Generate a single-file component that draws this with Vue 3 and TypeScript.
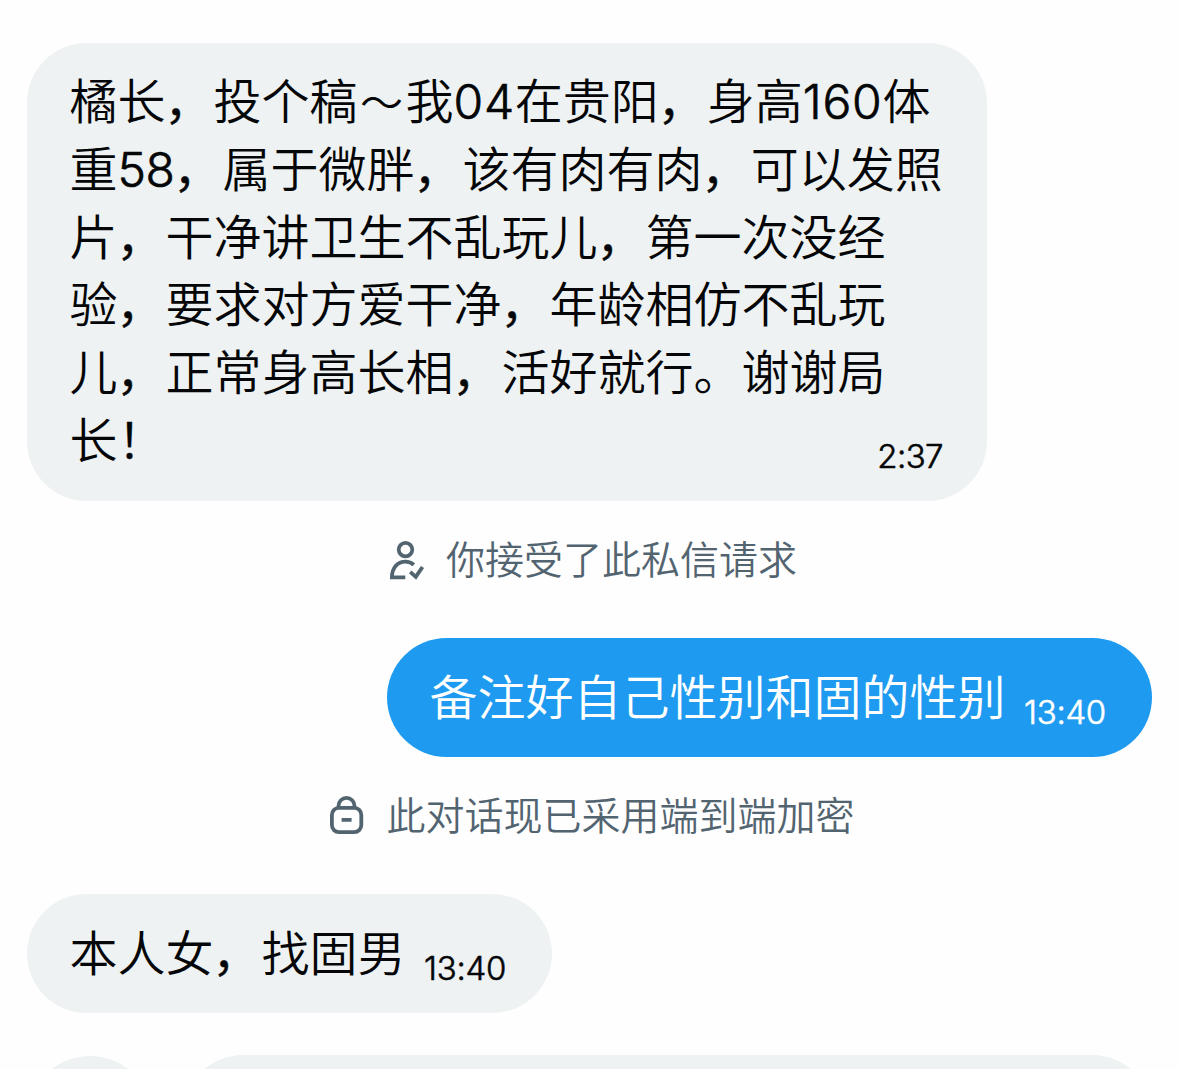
<script setup lang="ts">
interface Run {
  text: string
  kind: string
}

const request: string[] = [
  '橘长，投个稿～我04在贵阳，身高160体',
  '重58，属于微胖，该有肉有肉，可以发照',
  '片，干净讲卫生不乱玩儿，第一次没经',
  '验，要求对方爱干净，年龄相仿不乱玩',
  '儿，正常身高长相，活好就行。谢谢局',
  '长！',
]

function kindOf(text: string): string {
  if (/\d/.test(text)) return text === '58' ? 'num pair' : 'num'
  if (text === '，') return 'comma'
  if (text === '～') return 'wave'
  return text === '！' ? 'bang' : 'han'
}

function runs(line: string): Run[] {
  return (line.match(/\d+|[，！～]|[^\d，！～]+/g) ?? []).map((text) => ({ text, kind: kindOf(text) }))
}
</script>

<template>
  <main class="chat">
    <section class="bubble incoming long">
      <div class="body">
        <p v-for="(line, i) in request" :key="i" class="line">
          <span v-for="(run, j) in runs(line)" :key="j" :class="run.kind">{{ run.text }}</span>
        </p>
      </div>
      <time class="time">2:37</time>
    </section>

    <div class="notice accepted">
      <svg class="icon" width="40" height="44" viewBox="0 0 40 44" fill="none" stroke="currentColor" stroke-width="3.8">
        <circle cx="17.5" cy="11.6" r="6.8" />
        <path d="M17.3 39.4H3.9C4 30.2 9.2 23.7 17.5 23.7c3.4 0 6.2 1.1 8.3 3.1" />
        <path d="M22.2 33.8l5.6 5L34.5 29" />
      </svg>
      <span class="label">你接受了此私信请求</span>
    </div>

    <section class="bubble outgoing">
      <p class="line">备注好自己性别和固的性别</p>
      <time class="time">13:40</time>
    </section>

    <div class="notice encrypted">
      <svg class="icon" width="40" height="44" viewBox="0 0 40 44" fill="none" stroke="currentColor" stroke-width="3.8">
        <rect x="3.9" y="13.9" width="29.4" height="24.2" rx="7" />
        <path d="M10.5 13.9v-2a8 8 0 0 1 16 0v2M13.6 25.8h10" />
      </svg>
      <span class="label">此对话现已采用端到端加密</span>
    </div>

    <section class="bubble incoming short">
      <p class="line">
        <span v-for="(run, j) in runs('本人女，找固男')" :key="j" :class="run.kind">{{ run.text }}</span>
      </p>
      <time class="time">13:40</time>
    </section>

    <footer class="composer">
      <div class="round"></div>
      <div class="field"></div>
    </footer>
  </main>
</template>

<style>
body {
  margin: 0;
  background: #fefefe;
}
</style>

<style scoped>
.chat {
  box-sizing: border-box;
  width: 1179px;
  height: 1069px;
  padding: 43px 27px 0;
  display: flex;
  flex-direction: column;
  overflow: hidden;
  font-family: "Noto Sans CJK SC DemiLight", "Noto Sans CJK SC", sans-serif;
  font-weight: 350;
}
.bubble {
  box-sizing: border-box;
  flex: none;
  display: flex;
  border-radius: 60px;
  padding: 0 44px 0 42.5px;
}
.incoming {
  align-self: flex-start;
  background: #eef2f3;
  color: #050607;
}
.outgoing {
  align-self: flex-end;
  width: 765px;
  height: 118.5px;
  background: #1e9bf0;
  color: #fff;
}
.long {
  width: 960px;
  height: 457.5px;
  padding-top: 22.4px;
  justify-content: space-between;
}
.body {
  width: 0;
}
.short {
  width: 525px;
  height: 118.5px;
}
.outgoing,
.short {
  padding-top: 22.5px;
}
.line {
  display: flex;
  align-items: baseline;
  margin: 0;
  height: 67.67px;
  line-height: 67.67px;
  font-size: 48px;
  white-space: nowrap;
}
.line > span {
  flex: none;
}
.num {
  font-family: Inter, sans-serif;
  font-weight: 300;
  letter-spacing: 0.7px;
  -webkit-text-stroke: 0.7px currentColor;
}
.pair {
  letter-spacing: -0.4px;
}
.comma {
  margin: 0 1px 0 -1px;
  -webkit-text-stroke: 0.6px currentColor;
}
.wave {
  width: 48px;
  font-size: 43px;
  text-align: center;
}
.bang {
  -webkit-text-stroke: 0.4px currentColor;
}
.time {
  font-family: Inter, sans-serif;
  font-weight: 300;
  font-size: 33px;
  line-height: 40px;
  letter-spacing: -0.3px;
  white-space: nowrap;
  -webkit-text-stroke: 0.6px currentColor;
}
.long .time {
  margin-top: 370.6px;
  letter-spacing: -0.6px;
}
.outgoing .time,
.short .time {
  margin: 31.5px 0 0 18.5px;
}
.notice {
  flex: none;
  display: flex;
  align-items: center;
  height: 56px;
  color: #536471;
  font-size: 39px;
  line-height: 50px;
  white-space: nowrap;
}
.label {
  padding-bottom: 6px;
}
.icon {
  flex: none;
}
.accepted {
  margin: 31.5px 0 50px 361px;
  gap: 18px;
}
.encrypted {
  margin: 31.5px 0 50px 301px;
  gap: 18.5px;
}
.composer {
  flex: none;
  display: flex;
  margin-top: 42.5px;
  gap: 30px;
}
.round {
  width: 126px;
  height: 126px;
  margin-top: 1px;
  border-radius: 50%;
  background: #eef2f3;
}
.field {
  flex: 1;
  height: 120px;
  border-radius: 60px;
  background: #eef2f3;
}
</style>
